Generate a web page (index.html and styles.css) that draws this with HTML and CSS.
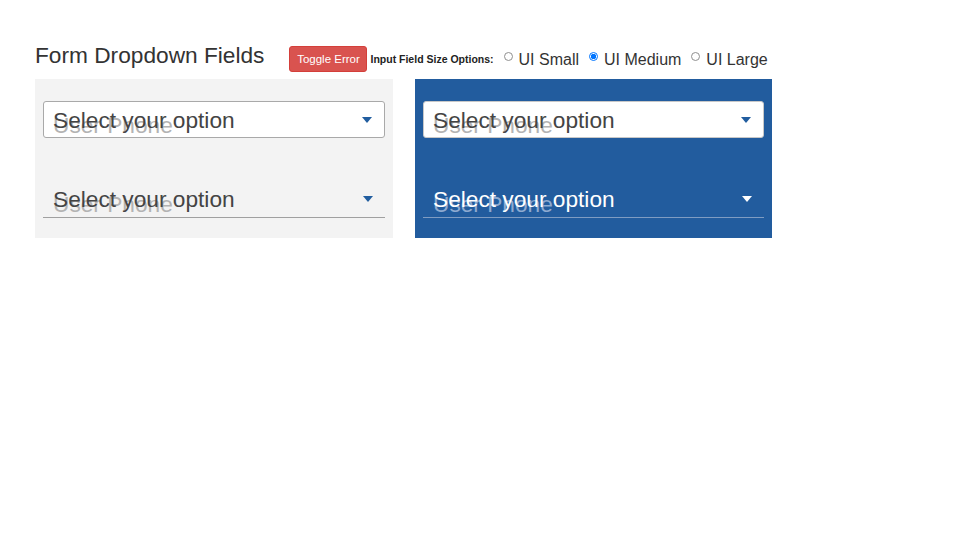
FILE: index.html
```html
<!DOCTYPE html>
<html>
<head>
<meta charset="utf-8">
<link rel="stylesheet" href="styles.css">
</head>
<body>
<div class="page">
  <div class="header">
    <h1 class="title">Form Dropdown Fields</h1>
    <button class="btn-error">Toggle Error</button>
    <span class="size-label">Input Field Size Options:</span>
    <label class="radio"><span class="radio-dot"></span>UI Small</label>
    <label class="radio"><span class="radio-dot checked"></span>UI Medium</label>
    <label class="radio"><span class="radio-dot"></span>UI Large</label>
  </div>
  <div class="panels">
    <div class="panel light">
      <div class="field boxed">
        <span class="placeholder">User Phone</span>
        <span class="value">Select your option</span>
        <span class="arrow"></span>
      </div>
      <div class="field underlined">
        <span class="placeholder">User Phone</span>
        <span class="value">Select your option</span>
        <span class="arrow"></span>
      </div>
    </div>
    <div class="panel dark">
      <div class="field boxed">
        <span class="placeholder">User Phone</span>
        <span class="value">Select your option</span>
        <span class="arrow"></span>
      </div>
      <div class="field underlined">
        <span class="placeholder">User Phone</span>
        <span class="value">Select your option</span>
        <span class="arrow"></span>
      </div>
    </div>
  </div>
</div>
</body>
</html>
```
FILE: styles.css
```css
html, body {
  margin: 0;
  padding: 0;
  background: #ffffff;
  font-family: "Liberation Sans", Arial, sans-serif;
  color: #333333;
}

.page {
  padding: 39px 0 0 35px;
}

.header {
  display: flex;
  align-items: center;
  height: 40px;
}

.title {
  margin: 0 25px 0 0;
  font-size: 22.7px;
  font-weight: normal;
  color: #333333;
  line-height: 30px;
  position: relative;
  top: -4px;
}

.btn-error {
  background: #d9534f;
  color: #ffffff;
  border: 1px solid #d43f3a;
  border-radius: 3px;
  font-family: "Liberation Sans", Arial, sans-serif;
  font-size: 11.5px;
  height: 26px;
  width: 78px;
  padding: 0;
  margin-right: 3px;
  position: relative;
  top: 0px;
}

.size-label {
  font-size: 10.5px;
  font-weight: bold;
  color: #222222;
  margin-right: 10px;
  position: relative;
  top: 0px;
}

.radio {
  display: flex;
  align-items: center;
  font-size: 16px;
  color: #333333;
  margin-right: 10px;
  position: relative;
  top: 1px;
}

.radio-dot {
  width: 9px;
  height: 9px;
  border: 1px solid #8f8f8f;
  border-radius: 50%;
  box-sizing: border-box;
  margin-right: 6px;
  position: relative;
  top: -4px;
  background: #fff;
}

.radio-dot.checked {
  border-color: #0075ff;
  background: radial-gradient(circle, #0075ff 0 2.5px, #fff 3px);
}

.panels {
  display: grid;
  grid-template-columns: 358px 357px;
  column-gap: 22px;
}

.panel {
  padding: 22px 8px 20px 8px;
  display: flex;
  flex-direction: column;
  gap: 43px;
}

.panel.light {
  background: #f3f3f3;
}

.panel.dark {
  background: #225c9e;
}

.field {
  position: relative;
  height: 37px;
  box-sizing: border-box;
  font-size: 22.7px;
  display: flex;
  align-items: center;
  padding-left: 9px;
}

.field.boxed {
  background: #ffffff;
  border: 1px solid #a9a9a9;
  border-radius: 3px;
}

.dark .field.boxed {
  border-color: #c8c8c8;
}

.field.underlined {
  height: 37px;
  padding-left: 10px;
  border-bottom: 1px solid #a0a0a0;
}

.dark .field.underlined {
  border-bottom-color: #7f9cc2;
}

.value {
  position: relative;
  color: #444444;
  line-height: 28px;
}

.dark .underlined .value {
  color: #ffffff;
}

.placeholder {
  position: absolute;
  left: 9px;
  top: 9px;
  color: #b3b3b3;
  line-height: 28px;
}

.underlined .placeholder {
  left: 10px;
}

.dark .underlined .placeholder {
  color: #8eaad0;
}

.arrow {
  position: absolute;
  right: 12px;
  top: 15px;
  width: 0;
  height: 0;
  border-left: 5px solid transparent;
  border-right: 5px solid transparent;
  border-top: 6px solid #215d9f;
}

.dark .underlined .arrow {
  border-top-color: #ffffff;
}
```
